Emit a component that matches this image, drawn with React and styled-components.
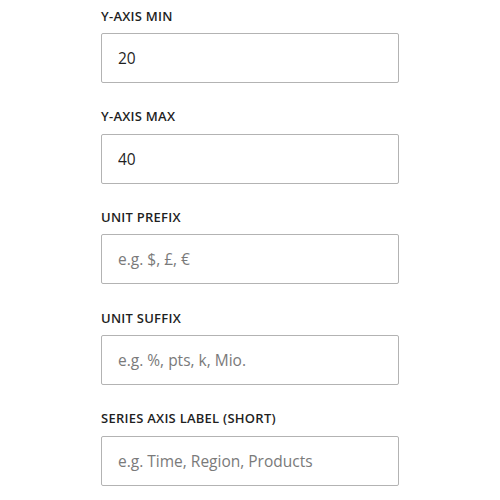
import React from "react";
import styled, { createGlobalStyle } from "styled-components";

const Global = createGlobalStyle`
  html, body { margin: 0; padding: 0; background: #fff; }
  body { font-family: "Open Sans", "Noto Sans", sans-serif; }
`;

const Form = styled.div`
  width: 298px;
  margin: 0 auto;
  padding-top: 7.5px;
  display: flex;
  flex-direction: column;
  gap: 25.2px;
`;

const Field = styled.label`
  display: flex;
  flex-direction: column;
`;

const Label = styled.span`
  font-size: 13px;
  line-height: 16px;
  font-weight: 600;
  letter-spacing: 0.25px;
  color: #1f1f1f;
  text-transform: uppercase;
  margin-bottom: 9.5px;
`;

const Input = styled.input`
  box-sizing: border-box;
  height: 50px;
  width: 100%;
  border: 1px solid #b3b3b3;
  border-radius: 2px;
  padding: 0 16px;
  font-family: "Open Sans", "Noto Sans", sans-serif;
  font-size: 15.5px;
  color: #1f1f1f;
  background: #fff;
  outline: none;
  &::placeholder { color: #7a7a7a; }
`;

const fields = [
  { label: "Y-Axis Min", value: "20" },
  { label: "Y-Axis Max", value: "40" },
  { label: "Unit Prefix", placeholder: "e.g. $, £, €" },
  { label: "Unit Suffix", placeholder: "e.g. %, pts, k, Mio." },
  { label: "Series Axis Label (short)", placeholder: "e.g. Time, Region, Products" },
];

export default function App() {
  return (
    <>
      <Global />
      <Form>
        {fields.map((f) => (
          <Field key={f.label}>
            <Label>{f.label}</Label>
            <Input defaultValue={f.value} placeholder={f.placeholder} />
          </Field>
        ))}
      </Form>
    </>
  );
}
